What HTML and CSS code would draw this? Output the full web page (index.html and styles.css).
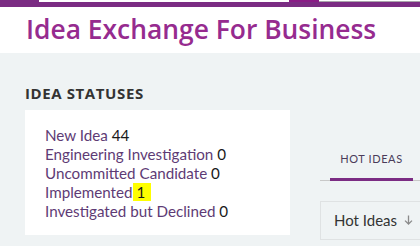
FILE: index.html
```html
<!DOCTYPE html>
<html>
<head>
<meta charset="utf-8">
<link rel="stylesheet" href="styles.css">
</head>
<body>
<div class="topbar">
  <div class="topstrip">
    <div class="seg seg-a"></div>
    <div class="seg seg-b"></div>
    <div class="seg seg-c"></div>
    <div class="seg seg-d"></div>
  </div>
  <div class="band"></div>
</div>
<header class="header">
  <h1 class="title">Idea Exchange For Business</h1>
</header>
<main class="main">
  <section class="left">
    <h2 class="section-title">IDEA STATUSES</h2>
    <div class="card">
      <ul class="statuses">
        <li><a class="status">New Idea</a> <span class="count">44</span></li>
        <li><a class="status">Engineering Investigation</a> <span class="count">0</span></li>
        <li><a class="status">Uncommitted Candidate</a> <span class="count">0</span></li>
        <li><a class="status">Implemented</a><span class="count hl"> 1 </span></li>
        <li><a class="status">Investigated but Declined</a> <span class="count">0</span></li>
      </ul>
    </div>
  </section>
  <section class="right">
    <div class="tabs">
      <div class="tab active">HOT IDEAS</div>
    </div>
    <div class="sortbox">Hot Ideas<svg class="arrow" width="9" height="10" viewBox="0 0 9 10"><path d="M4.5 0.5V9M1 5.6L4.5 9L8 5.6" fill="none" stroke="#8a8a8a" stroke-width="1.3"/></svg></div>
  </section>
</main>
</body>
</html>
```

FILE: styles.css
```css
* { box-sizing: border-box; }
html, body { margin: 0; padding: 0; }
body {
  width: 420px;
  height: 246px;
  overflow: hidden;
  background: #eff3f4;
  font-family: "Lato", "Open Sans", sans-serif;
}
.topbar { height: 7px; display: flex; flex-direction: column; }
.topstrip { height: 2px; display: flex; }
.seg { height: 2px; }
.seg-a { width: 39px; background: #7b2c83; }
.seg-b { width: 250px; background: #ffffff; }
.seg-c { width: 30px; background: #8a1c86; }
.seg-d { flex: 1; background: #ffffff; border-bottom: 1px solid #a9a4ab; }
.band { height: 5px; background: #7b2c83; }
.header {
  background: #ffffff;
  height: 46px;
  padding-left: 26px;
  display: flex;
  align-items: center;
}
.title {
  margin: 0;
  font-family: "Open Sans", sans-serif;
  font-weight: 600;
  font-size: 26.4px;
  color: #962b8f;
  line-height: 1;
  padding-bottom: 1px;
  white-space: nowrap;
}
.main {
  display: flex;
  padding-top: 31px;
}
.left { width: 290px; padding-left: 25px; }
.section-title {
  margin: 0 0 8px 0;
  font-family: "Open Sans", sans-serif;
  font-weight: 700;
  font-size: 15px;
  color: #333333;
  letter-spacing: 0.6px;
  line-height: 18px;
  white-space: nowrap;
}
.card {
  background: #ffffff;
  width: 265px;
  height: 125px;
  padding: 16px 0 0 20px;
}
.statuses { list-style: none; margin: 0; padding: 0; }
.statuses li {
  font-size: 15.2px;
  line-height: 19px;
  height: 19px;
  white-space: nowrap;
  color: #1a1a1a;
}
.status { color: #5e3b75; }
.count { color: #1a1a1a; }
.hl { background: #ffff00; white-space: pre; padding-right: 2px; }
.right { flex: 1; padding-left: 30px; padding-top: 66px; }
.tabs {
  border-bottom: 1px solid #c8c8c8;
  height: 31px;
  display: flex;
  align-items: flex-start;
}
.tab {
  margin-left: 10px;
  width: 83px;
  text-align: center;
  font-size: 11px;
  letter-spacing: 0.6px;
  color: #4a3b5a;
  line-height: 14px;
  padding-top: 2px;
  white-space: nowrap;
}
.tab.active { border-bottom: 3px solid #7b2c83; height: 31px; margin-bottom: -1px; }
.sortbox {
  margin-top: 20px;
  border: 1px solid #dfe2e3;
  border-right: none;
  height: 39px;
  padding-left: 13px;
  font-size: 15px;
  line-height: 37px;
  color: #333333;
  white-space: nowrap;
  display: flex;
  align-items: center;
}
.arrow { margin-left: 7px; margin-top: -1px; }
```
